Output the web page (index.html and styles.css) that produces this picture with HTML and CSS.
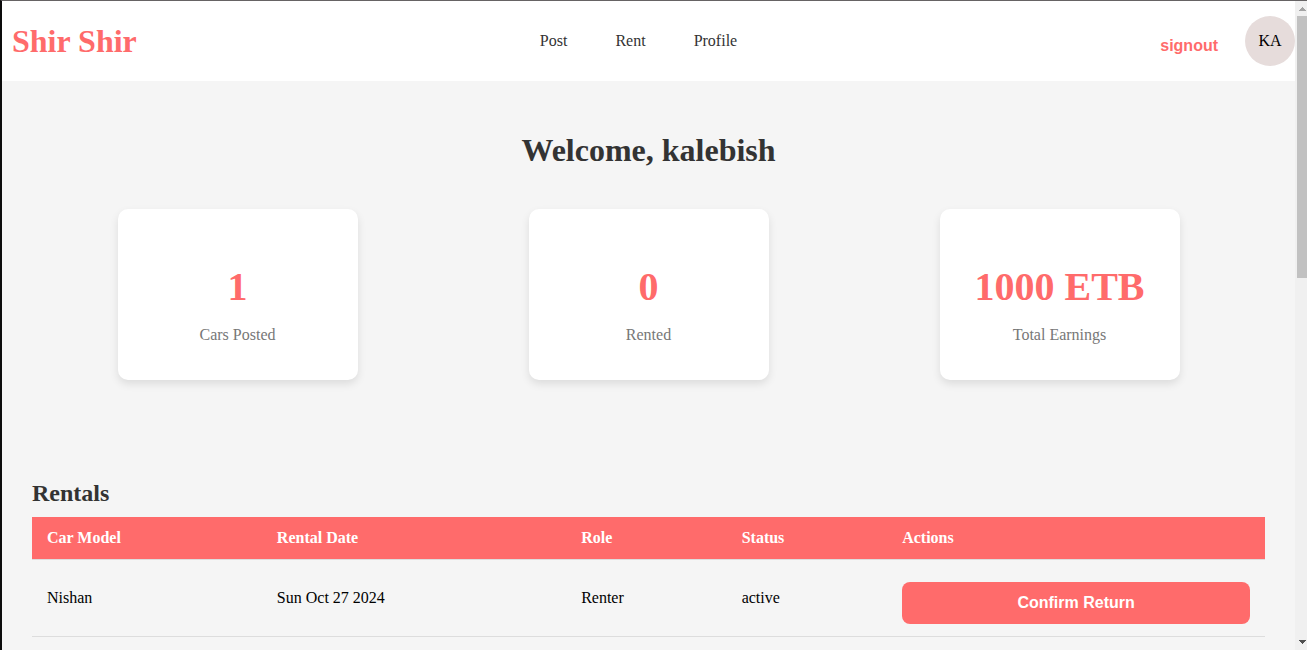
FILE: index.html
```html
<!DOCTYPE html>
<html lang="en">
<head>
<meta charset="utf-8">
<title>Shir Shir</title>
<link rel="stylesheet" href="styles.css">
</head>
<body>
<div class="window">
  <div class="page">
    <header class="header">
      <h1 class="logo">Shir Shir</h1>
      <nav class="nav">
        <a href="#post">Post</a>
        <a href="#rent">Rent</a>
        <a href="#profile">Profile</a>
      </nav>
      <div class="account">
        <button class="signout" type="button">signout</button>
        <div class="avatar">KA</div>
      </div>
    </header>
    <main class="main">
      <h1 class="welcome">Welcome, kalebish</h1>
      <section class="stats">
        <div class="card"><h2 class="value">1</h2><p class="label">Cars Posted</p></div>
        <div class="card"><h2 class="value">0</h2><p class="label">Rented</p></div>
        <div class="card"><h2 class="value">1000 ETB</h2><p class="label">Total Earnings</p></div>
      </section>
      <section class="rentals">
        <h2 class="section-title">Rentals</h2>
        <table class="table">
          <thead>
            <tr>
              <th class="col-model">Car Model</th>
              <th class="col-date">Rental Date</th>
              <th class="col-role">Role</th>
              <th class="col-status">Status</th>
              <th>Actions</th>
            </tr>
          </thead>
          <tbody>
            <tr>
              <td>Nishan</td>
              <td>Sun Oct 27 2024</td>
              <td>Renter</td>
              <td>active</td>
              <td><button class="confirm" type="button">Confirm Return</button></td>
            </tr>
          </tbody>
        </table>
      </section>
    </main>
  </div>
  <div class="scrollbar" aria-hidden="true">
    <svg class="arrow" width="10" height="15" viewBox="0 0 10 15" shape-rendering="crispEdges"><path fill="#a3a3a3" d="M5 6h1v1h1v1h1v1h1v1H2V9h1V8h1V7h1z"/></svg>
    <div class="track"><div class="thumb"></div></div>
    <svg class="arrow" width="10" height="15" viewBox="0 0 10 15" shape-rendering="crispEdges"><path fill="#505050" d="M2 5h7v1H8v1H7v1H6v1H5V8H4V7H3V6H2z"/></svg>
  </div>
</div>
</body>
</html>
```
FILE: styles.css
```css
* {
  box-sizing: border-box;
}

body {
  margin: 0;
  font-family: "Liberation Serif", "Times New Roman", serif;
  font-size: 16px;
  line-height: 18px;
  color: #000;
  background: #f5f5f5;
}

h1, h2, p {
  margin: 0;
}

.window {
  display: flex;
  height: 100vh;
  overflow: hidden;
  border-top: 1px solid #666364;
  border-left: 2px solid #0c0c0c;
}

.page {
  flex: 1;
  min-width: 0;
}

.header {
  display: flex;
  justify-content: space-between;
  align-items: center;
  padding: 15px 0 15px 10px;
  background: #fff;
}

.logo {
  font-size: 32px;
  line-height: 36px;
  color: #ff6b6b;
}

.nav {
  display: flex;
  gap: 48px;
}

.nav a {
  color: #333;
  text-decoration: none;
}

.account {
  display: flex;
  align-items: center;
  gap: 7px;
}

.signout {
  margin-top: 10px;
  padding: 10px 20px;
  border: 0;
  background: none;
  color: #ff6b6b;
  font: bold 16px/18px "Liberation Sans", Arial, sans-serif;
}

.avatar {
  display: flex;
  align-items: center;
  justify-content: center;
  width: 50px;
  height: 50px;
  border-radius: 50%;
  background: #e6dcdb;
}

.main {
  padding: 51px 30px;
}

.welcome {
  font-size: 32px;
  line-height: 36px;
  text-align: center;
  color: #333;
}

.stats {
  display: flex;
  justify-content: space-around;
  margin: 41px 0 100px;
}

.card {
  width: 240px;
  padding: 55px 20px 36px;
  border-radius: 10px;
  background: #fff;
  box-shadow: 0 4px 8px rgba(0, 0, 0, 0.1);
  text-align: center;
}

.value {
  margin-bottom: 16px;
  font-size: 40px;
  line-height: 46px;
  color: #ff6b6b;
}

.label {
  color: #777;
}

.section-title {
  margin-bottom: 10px;
  font-size: 24px;
  line-height: 27px;
  color: #333;
}

.table {
  width: 100%;
  table-layout: fixed;
  border-collapse: collapse;
}

.table th,
.table td {
  padding: 12px 15px;
  border-bottom: 1px solid #ddd;
  text-align: left;
}

.table th {
  background: #ff6b6b;
  color: #fff;
}

.col-model {
  width: 18.64%;
}

.col-date {
  width: 24.68%;
}

.col-role,
.col-status {
  width: 13.02%;
}

.confirm {
  display: block;
  width: 100%;
  margin-top: 10px;
  padding: 12px 20px;
  border: 0;
  border-radius: 8px;
  background: #ff6b6b;
  color: #fff;
  font: bold 16px/18px "Liberation Sans", Arial, sans-serif;
}

.scrollbar {
  display: flex;
  flex-direction: column;
  width: 12px;
  padding-left: 2px;
  background: #f0f0f0;
}

.arrow {
  display: block;
}

.track {
  flex: 1;
}

.thumb {
  height: 42.3%;
  background: #c1c1c1;
}
```
